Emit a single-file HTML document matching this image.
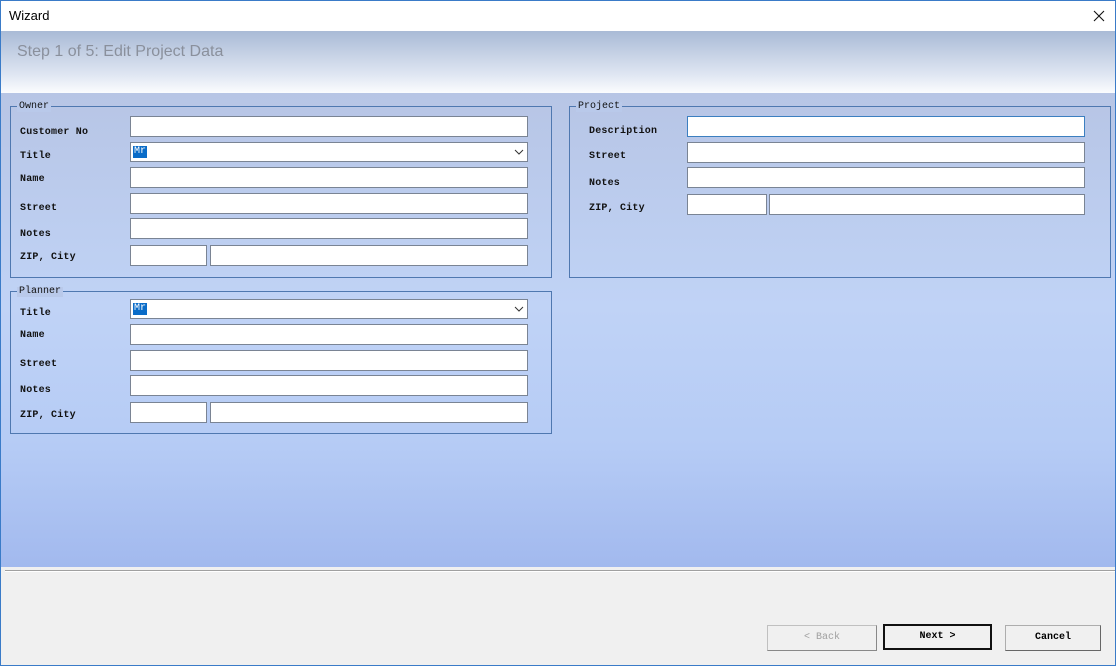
<!DOCTYPE html>
<html><head><meta charset="utf-8"><style>
*{margin:0;padding:0;box-sizing:border-box}
body{width:1116px;height:666px;position:relative;overflow:hidden;background:#f0f0f0;font-family:"Liberation Mono","Noto Sans CJK SC",monospace;}
.a{position:absolute}
.win{left:0;top:0;width:1116px;height:666px;border:1px solid #3a7bc8;}
.tb{left:1px;top:1px;width:1114px;height:30px;background:#fff;font-family:"Liberation Sans",sans-serif;font-size:13px;color:#000;}
.hd{left:1px;top:31px;width:1114px;height:62px;background:linear-gradient(#a9bad6,#dfe6f2 70%,#fbfcfe);}
.bd{left:1px;top:93px;width:1114px;height:474px;background:linear-gradient(#b7c5e5 0%,#c0d3f6 45%,#b5cbf5 75%,#a2b9ee 100%);}
.gb{border:1px solid #4f78b0;}
.lg{font-size:10px;color:#111;background:#b9c9ea;padding:0 2px;line-height:10px}
.lb{font-size:10px;color:#111;line-height:12px;font-weight:bold;letter-spacing:0.2px}
.in{background:#fff;border:1px solid #7a8494;height:21px}
.btn{height:26px;background:#f0f0f0;border:1px solid #adadad;font-size:10px;text-align:center;line-height:24px;font-weight:bold}
.sel{background:#0a6cc8;color:#fff;font-size:10px;line-height:12px;padding:0 1px;}
</style></head><body>
<div class="a win"></div>
<div class="a tb"><span class="a" style="left:8px;top:7px">Wizard</span>
<svg class="a" style="left:1092px;top:9px" width="12" height="12"><path d="M1 1L11 11M11 1L1 11" stroke="#111" stroke-width="1.1"/></svg></div>
<div class="a hd"><span class="a" style="left:16px;top:12px;font-family:'Liberation Sans',sans-serif;font-size:16px;color:#8a909c">Step 1 of 5: Edit Project Data</span></div>
<div class="a bd"></div>

<!-- Owner -->
<div class="a gb" style="left:10px;top:106px;width:542px;height:172px"></div>
<span class="a lg" style="left:17px;top:102px">Owner</span>
<span class="a lb" style="left:20px;top:127px">Customer No</span>
<span class="a lb" style="left:20px;top:151px">Title</span>
<span class="a lb" style="left:20px;top:174px">Name</span>
<span class="a lb" style="left:20px;top:203px">Street</span>
<span class="a lb" style="left:20px;top:229px">Notes</span>
<span class="a lb" style="left:20px;top:252px">ZIP, City</span>
<div class="a in" style="left:130px;top:116px;width:398px"></div>
<div class="a in" style="left:130px;top:142px;width:398px;height:20px"><span class="a sel" style="left:2px;top:3px">Mr</span><svg class="a" style="left:383px;top:6px" width="10" height="7"><path d="M1 1L5 5L9 1" stroke="#333" fill="none"/></svg></div>
<div class="a in" style="left:130px;top:167px;width:398px"></div>
<div class="a in" style="left:130px;top:193px;width:398px"></div>
<div class="a in" style="left:130px;top:218px;width:398px"></div>
<div class="a in" style="left:130px;top:245px;width:77px"></div>
<div class="a in" style="left:210px;top:245px;width:318px"></div>

<!-- Planner -->
<div class="a gb" style="left:10px;top:291px;width:542px;height:143px"></div>
<span class="a lg" style="left:17px;top:287px">Planner</span>
<span class="a lb" style="left:20px;top:308px">Title</span>
<span class="a lb" style="left:20px;top:330px">Name</span>
<span class="a lb" style="left:20px;top:359px">Street</span>
<span class="a lb" style="left:20px;top:385px">Notes</span>
<span class="a lb" style="left:20px;top:410px">ZIP, City</span>
<div class="a in" style="left:130px;top:299px;width:398px;height:20px"><span class="a sel" style="left:2px;top:3px">Mr</span><svg class="a" style="left:383px;top:6px" width="10" height="7"><path d="M1 1L5 5L9 1" stroke="#333" fill="none"/></svg></div>
<div class="a in" style="left:130px;top:324px;width:398px"></div>
<div class="a in" style="left:130px;top:350px;width:398px"></div>
<div class="a in" style="left:130px;top:375px;width:398px"></div>
<div class="a in" style="left:130px;top:402px;width:77px"></div>
<div class="a in" style="left:210px;top:402px;width:318px"></div>

<!-- Project -->
<div class="a gb" style="left:569px;top:106px;width:542px;height:172px"></div>
<span class="a lg" style="left:576px;top:102px">Project</span>
<span class="a lb" style="left:589px;top:126px">Description</span>
<span class="a lb" style="left:589px;top:151px">Street</span>
<span class="a lb" style="left:589px;top:178px">Notes</span>
<span class="a lb" style="left:589px;top:203px">ZIP, City</span>
<div class="a in" style="left:687px;top:116px;width:398px;border-color:#3c7fc0"></div>
<div class="a in" style="left:687px;top:142px;width:398px"></div>
<div class="a in" style="left:687px;top:167px;width:398px"></div>
<div class="a in" style="left:687px;top:194px;width:80px"></div>
<div class="a in" style="left:769px;top:194px;width:316px"></div>

<!-- bottom -->
<div class="a" style="left:5px;top:570px;width:1110px;height:1px;background:#a0a0a0"></div>
<div class="a" style="left:5px;top:571px;width:1110px;height:1px;background:#fff"></div>
<div class="a btn" style="left:767px;top:625px;width:110px;color:#a0a0a0;font-weight:normal;border-color:#c0c0c0;border-right-color:#888;border-bottom-color:#888">&lt; Back</div>
<div class="a btn" style="left:883px;top:624px;width:109px;border:2px solid #111;line-height:22px">Next &gt;</div>
<div class="a btn" style="left:1005px;top:625px;width:96px;border-right-color:#666;border-bottom-color:#666">Cancel</div>
</body></html>
